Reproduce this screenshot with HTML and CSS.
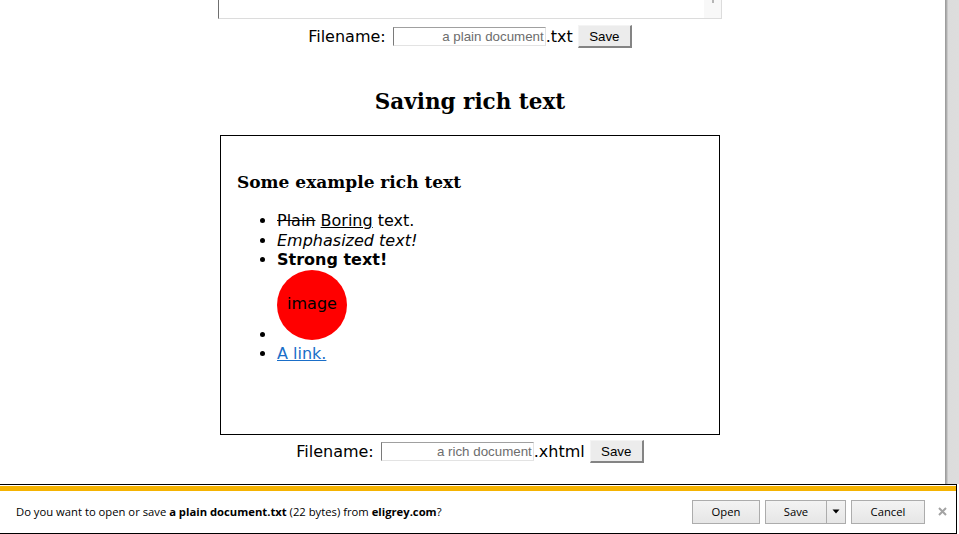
FILE: index.html
```html
<!DOCTYPE html>
<html lang="en">
<head>
<meta charset="utf-8">
<title>FileSaver.js demo</title>
<link rel="stylesheet" href="styles.css">
</head>
<body>
<div class="page">
  <div class="ta-stub"><div class="ta-track"><span class="ta-mark"></span></div></div>
  <div class="file-row row1">
    <span class="label">Filename:</span><input class="fname" type="text" placeholder="a plain document"><span class="ext">.txt</span><button class="save" type="button">Save</button>
  </div>
  <h2 class="title">Saving rich text</h2>
  <div class="rich">
    <h3 class="rich-head">Some example rich text</h3>
    <ul class="rich-list">
      <li><del>Plain</del> <u>Boring</u> text.</li>
      <li><em>Emphasized text!</em></li>
      <li><strong>Strong text!</strong></li>
      <li><svg class="pic" width="70" height="70" viewBox="0 0 70 70"><circle cx="35" cy="35" r="35" fill="#ff0000"/><text x="35" y="39" text-anchor="middle" class="pic-text">image</text></svg></li>
      <li><a class="link" href="#">A link.</a></li>
    </ul>
  </div>
  <div class="file-row row2">
    <span class="label">Filename:</span><input class="fname" type="text" placeholder="a rich document"><span class="ext">.xhtml</span><button class="save" type="button">Save</button>
  </div>
</div>
<div class="scrollbar"></div>
<div class="notify">
  <div class="stripe"></div>
  <div class="bar">
    <div class="msg">Do you want to open or save <b>a plain document.txt</b> (22 bytes) from <b>eligrey.com</b>?</div>
    <div class="btns">
      <button class="nbtn btn-open" type="button">Open</button>
      <div class="split">
        <button class="nbtn split-main" type="button">Save</button>
        <button class="nbtn split-arrow" type="button"><svg width="8" height="5" viewBox="0 0 8 5"><path d="M0.5 0.5h7L4 4.5z" fill="#000"/></svg></button>
      </div>
      <button class="nbtn btn-cancel" type="button">Cancel</button>
    </div>
    <div class="close"><svg width="9" height="9" viewBox="0 0 9 9"><path d="M1 1L8 8M8 1L1 8" stroke="#a3a3a3" stroke-width="2"/></svg></div>
  </div>
</div>
</body>
</html>
```

FILE: styles.css
```css
html, body {
  margin: 0;
  padding: 0;
  background: #fff;
}
body {
  font-family: "DejaVu Sans", Verdana, sans-serif;
  font-size: 16px;
  color: #000;
  overflow: hidden;
  height: 534px;
}
.page {
  width: 940px;
  display: flex;
  flex-direction: column;
  align-items: center;
}
.ta-stub {
  width: 504px;
  height: 19px;
  box-sizing: border-box;
  border-left: 1px solid #6f6f6f;
  border-right: 1px solid #dcdcdc;
  border-bottom: 1px solid #dcdcdc;
  display: flex;
  justify-content: flex-end;
}
.ta-track {
  width: 17px;
  background: #f8f8f8;
  display: flex;
  justify-content: center;
}
.ta-mark {
  width: 2px;
  height: 3px;
  background: #b5b5b5;
}
.file-row {
  display: flex;
  align-items: center;
  height: 23px;
}
.row1 { margin-top: 6px; }
.row2 { margin-top: 5px; }
.label { margin-right: 7px; }
.fname {
  width: 153px;
  height: 19px;
  box-sizing: border-box;
  margin: 0;
  padding: 0 1px;
  border: 1px solid;
  border-color: #a0a0a0 #e3e3e3 #e3e3e3 #7a7a7a;
  font-family: "Liberation Sans", Arial, sans-serif;
  font-size: 13.333px;
  text-align: right;
  background: #fff;
}
.fname::placeholder {
  color: #6d6d6d;
  opacity: 1;
}
.save {
  margin: 0 0 0 5px;
  width: 54px;
  height: 23px;
  box-sizing: border-box;
  padding: 0;
  border-style: solid;
  border-width: 1px 2px 2px 1px;
  border-color: #f4f4f4 #848484 #848484 #f4f4f4;
  background: #ececec;
  font-family: "Liberation Sans", Arial, sans-serif;
  font-size: 13.333px;
  color: #000;
}
.title {
  font-family: "DejaVu Serif", Georgia, serif;
  font-weight: bold;
  font-size: 21.5px;
  line-height: 28px;
  margin: 40px 0 19px;
}
.rich {
  width: 500px;
  height: 300px;
  box-sizing: border-box;
  border: 1px solid #000;
  padding: 16px;
  overflow: hidden;
}
.rich-head {
  font-family: "DejaVu Serif", Georgia, serif;
  font-weight: bold;
  font-size: 17px;
  line-height: 22px;
  margin: 18.72px 0;
}
.rich-list {
  margin: 16px 0;
  padding-left: 40px;
  line-height: 19.5px;
}
.pic { display: inline-block; vertical-align: baseline; }
.pic-text {
  font-family: "DejaVu Sans", Verdana, sans-serif;
  font-size: 16px;
  fill: #000;
}
.link { color: #1a6ec8; }
.scrollbar {
  position: fixed;
  top: 0;
  right: 0;
  width: 14px;
  height: 484px;
  background: linear-gradient(to right, #979797 0, #b4b4b4 2px, #dcdcdc 3px, #dddddd 100%);
}
.notify {
  position: fixed;
  left: 0;
  bottom: 0;
  width: 957px;
  height: 50px;
  box-sizing: border-box;
  border: 1px solid #000;
  border-left: none;
  padding-top: 1px;
  background: #fff;
  display: flex;
  flex-direction: column;
  font-family: "Open Sans", "Segoe UI", sans-serif;
  font-size: 11.25px;
  color: #000;
}
.stripe {
  height: 5px;
  background: #f5b301;
}
.bar {
  flex: 1;
  display: flex;
  align-items: center;
  padding: 0 4px 1px 16px;
}
.msg { flex: 1; white-space: nowrap; }
.btns {
  display: flex;
  gap: 5px;
}
.nbtn {
  height: 24px;
  box-sizing: border-box;
  margin: 0;
  padding: 0;
  border: 1px solid #acacac;
  background: linear-gradient(#f3f3f3, #e6e6e6);
  font-family: "Open Sans", "Segoe UI", sans-serif;
  font-size: 11.25px;
  color: #000;
  display: flex;
  align-items: center;
  justify-content: center;
}
.btn-open { width: 68px; }
.btn-cancel { width: 74px; }
.split { display: flex; }
.split-main { width: 61px; border-right: none; }
.split-arrow { width: 20px; }
.close {
  width: 20px;
  margin-left: 7px;
  display: flex;
  justify-content: center;
}
```
